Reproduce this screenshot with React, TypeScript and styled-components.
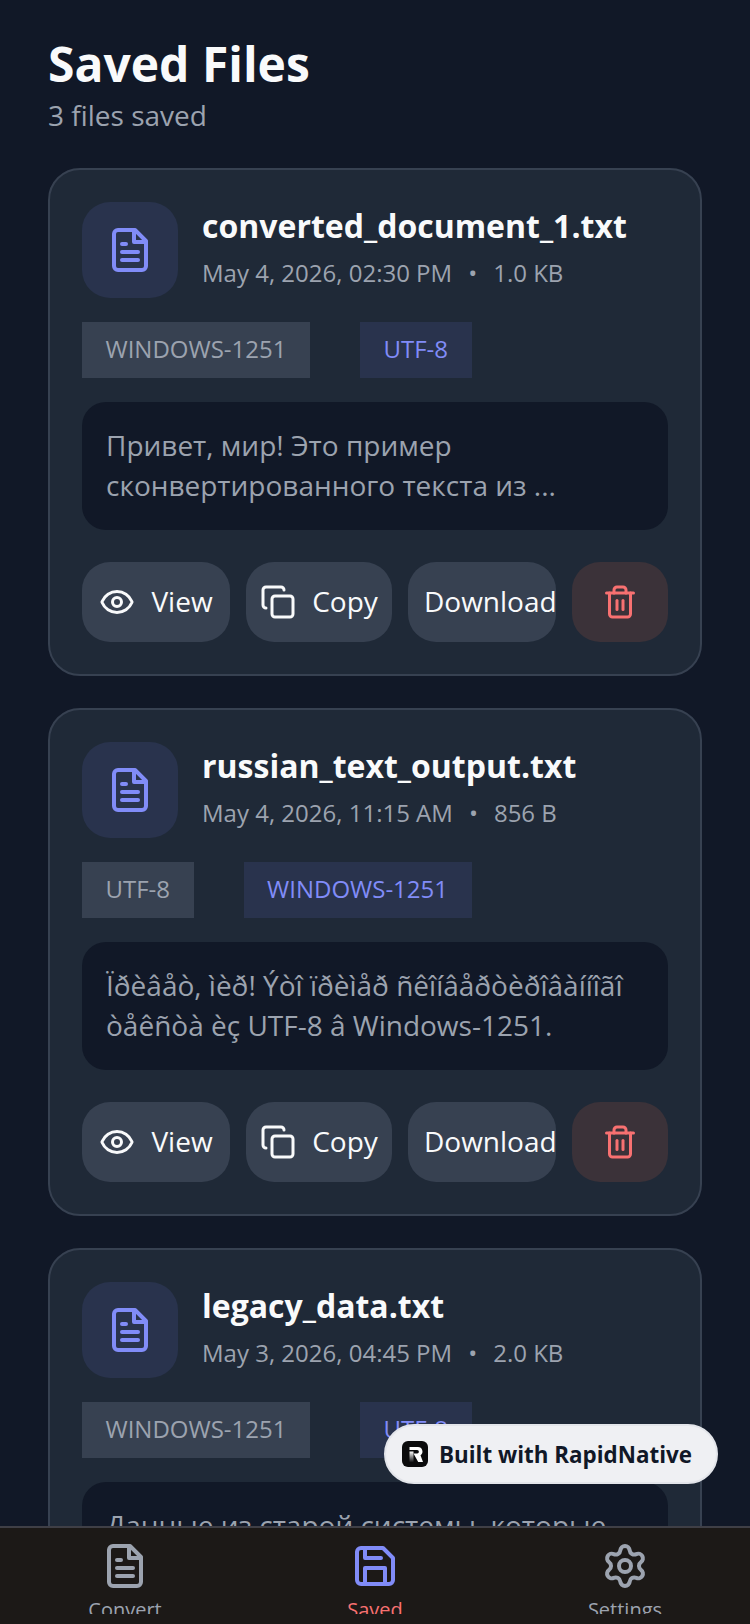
import styled, { createGlobalStyle } from "styled-components";
import { Copy, Eye, Settings, Trash2 } from "lucide-react";

const GlobalStyle = createGlobalStyle`
  html, body {
    margin: 0;
    padding: 0;
    background: #111827;
  }
  * {
    box-sizing: border-box;
  }
`;

const Screen = styled.div`
  position: relative;
  display: flex;
  flex-direction: column;
  width: 750px;
  height: 1624px;
  overflow: hidden;
  background: #111827;
  font-family: "Open Sans", "Noto Sans", sans-serif;
`;

const Scroll = styled.main`
  flex: 1;
  min-height: 0;
  overflow: hidden;
  padding: 32px 48px 0;
`;

const Title = styled.h1`
  margin: 0;
  font-size: 48px;
  line-height: 64px;
  font-weight: 700;
  color: #f9fafb;
`;

const Subtitle = styled.p`
  margin: 0 0 34px;
  font-size: 28px;
  line-height: 38px;
  color: #9ca3af;
`;

const CardList = styled.div`
  display: flex;
  flex-direction: column;
  gap: 32px;
`;

const Card = styled.article`
  padding: 32px;
  border: 2px solid #374151;
  border-radius: 32px;
  background: #1f2937;
`;

const CardHead = styled.div`
  display: flex;
  align-items: flex-start;
  gap: 24px;
  margin-bottom: 24px;
`;

const IconTile = styled.div`
  display: flex;
  align-items: center;
  justify-content: center;
  width: 96px;
  height: 96px;
  border-radius: 28px;
  background: #29334d;
  color: #818cf8;
`;

const FileName = styled.div`
  font-size: 32px;
  line-height: 47px;
  font-weight: 700;
  color: #f9fafb;
`;

const Meta = styled.div`
  display: flex;
  gap: 16px;
  margin-top: 4px;
  font-size: 24px;
  line-height: 40px;
  color: #9ca3af;
`;

const Tags = styled.div`
  display: flex;
  gap: 50px;
  margin-bottom: 24px;
`;

const Tag = styled.span<{ $target?: boolean }>`
  height: 56px;
  padding: 0 23.5px;
  font-size: 24px;
  line-height: 54px;
  color: ${(p) => (p.$target ? "#818cf8" : "#9ca3af")};
  background: ${(p) => (p.$target ? "#29334d" : "#374151")};
`;

const Preview = styled.div`
  padding: 23px 24px 25px;
  margin-bottom: 32px;
  border-radius: 24px;
  background: #111827;
  font-size: 28px;
  line-height: 40px;
  color: #9ca3af;
`;

const Actions = styled.div`
  display: grid;
  grid-template-columns: 148px 146px 148px 96px;
  gap: 16px;
`;

const ActionButton = styled.button`
  min-width: 0;
  display: flex;
  align-items: center;
  justify-content: center;
  gap: 16px;
  height: 80px;
  padding: 0 16px;
  border: 0;
  border-radius: 28px;
  background: #374151;
  color: #f9fafb;
  font-family: inherit;
  font-size: 28px;
  white-space: nowrap;

  svg {
    flex: none;
  }
`;

const ActionLabel = styled.span`
  margin-bottom: 2px;
`;

const DownloadButton = styled(ActionButton)`
  justify-content: flex-start;
`;

const DeleteButton = styled(ActionButton)`
  background: #3b3239;
  color: #f87171;
`;

const TabBar = styled.nav`
  flex: 0 0 98px;
  display: grid;
  grid-template-columns: repeat(3, 1fr);
  border-top: 2px solid #3f3f46;
  background: #1c1917;
  overflow: hidden;
`;

const Tab = styled.div<{ $active?: boolean }>`
  display: flex;
  flex-direction: column;
  align-items: center;
  padding-top: 14px;
  color: ${(p) => (p.$active ? "#818cf8" : "#9ca3af")};
`;

const TabLabel = styled.span<{ $active?: boolean }>`
  height: 19px;
  overflow: hidden;
  margin-top: 5px;
  font-size: 20px;
  line-height: 30px;
  color: ${(p) => (p.$active ? "#f87171" : "#9ca3af")};
`;

const Badge = styled.div`
  position: absolute;
  left: 384px;
  top: 1424px;
  display: flex;
  align-items: center;
  gap: 11px;
  width: 334px;
  height: 60px;
  padding: 0 16px;
  border: 2px solid #e3e5ea;
  border-radius: 30px;
  background: #eff0f3;
  color: #111827;
  font-size: 22.4px;
  font-weight: 700;
  white-space: nowrap;
`;

const BadgeLogo = styled.svg`
  flex: none;
  width: 26px;
  height: 26px;
`;

const Glyph = styled.svg`
  fill: none;
  stroke: currentColor;
  stroke-width: 2;
  stroke-linecap: round;
  stroke-linejoin: round;
`;

// the file glyph with the hard diagonal fold, as in the reference
function DocIcon() {
  return (
    <Glyph width="48" height="48" viewBox="0 0 24 24">
      <path d="M14.500 2H6a2 2 0 0 0-2 2v16a2 2 0 0 0 2 2h12a2 2 0 0 0 2-2V7.500L14.500 2z" />
      <path d="M14 2v6h6" />
      <path d="M16 13H8" />
      <path d="M16 17H8" />
      <path d="M10 9H8" />
    </Glyph>
  );
}

function SaveIcon() {
  return (
    <Glyph width="48" height="48" viewBox="0 0 24 24">
      <path d="M19 21H5a2 2 0 0 1-2-2V5a2 2 0 0 1 2-2h11l5 5v11a2 2 0 0 1-2 2z" />
      <path d="M17 21v-8H7v8" />
      <path d="M7 3v5h8" />
    </Glyph>
  );
}

const files = [
  {
    name: "converted_document_1.txt",
    date: "May 4, 2026, 02:30 PM",
    size: "1.0 KB",
    from: "WINDOWS-1251",
    to: "UTF-8",
    text: "Привет, мир! Это пример сконвертированного текста из ...",
  },
  {
    name: "russian_text_output.txt",
    date: "May 4, 2026, 11:15 AM",
    size: "856 B",
    from: "UTF-8",
    to: "WINDOWS-1251",
    text: "Ïðèâåò, ìèð! Ýòî ïðèìåð ñêîíâåðòèðîâàííîãî òåêñòà èç UTF-8 â Windows-1251.",
  },
  {
    name: "legacy_data.txt",
    date: "May 3, 2026, 04:45 PM",
    size: "2.0 KB",
    from: "WINDOWS-1251",
    to: "UTF-8",
    text: "Данные из старой системы, которые",
  },
];

export default function App() {
  return (
    <Screen>
      <GlobalStyle />
      <Scroll>
        <Title>Saved Files</Title>
        <Subtitle>3 files saved</Subtitle>
        <CardList>
          {files.map((file) => (
            <Card key={file.name}>
              <CardHead>
                <IconTile>
                  <DocIcon />
                </IconTile>
                <div>
                  <FileName>{file.name}</FileName>
                  <Meta>
                    <span>{file.date}</span>
                    <span>•</span>
                    <span>{file.size}</span>
                  </Meta>
                </div>
              </CardHead>
              <Tags>
                <Tag>{file.from}</Tag>
                <Tag $target>{file.to}</Tag>
              </Tags>
              <Preview>{file.text}</Preview>
              <Actions>
                <ActionButton>
                  <Eye size={36} />
                  <ActionLabel>View</ActionLabel>
                </ActionButton>
                <ActionButton>
                  <Copy size={36} />
                  <ActionLabel>Copy</ActionLabel>
                </ActionButton>
                <DownloadButton>
                  <ActionLabel>Download</ActionLabel>
                </DownloadButton>
                <DeleteButton aria-label="Delete">
                  <Trash2 size={36} />
                </DeleteButton>
              </Actions>
            </Card>
          ))}
        </CardList>
      </Scroll>
      <TabBar>
        <Tab>
          <DocIcon />
          <TabLabel>Convert</TabLabel>
        </Tab>
        <Tab $active>
          <SaveIcon />
          <TabLabel $active>Saved</TabLabel>
        </Tab>
        <Tab>
          <Settings size={48} />
          <TabLabel>Settings</TabLabel>
        </Tab>
      </TabBar>
      <Badge>
        <BadgeLogo viewBox="0 0 26 26">
          <defs>
            <linearGradient id="stemFade" x1="0" y1="0" x2="0" y2="1">
              <stop offset="0" stopColor="#fff" />
              <stop offset="1" stopColor="#fff" stopOpacity="0.05" />
            </linearGradient>
          </defs>
          <rect width="26" height="26" rx="6" fill="#0b0b0c" />
          <path d="M7.500 10.500h4v10.500h-4z" fill="url(#stemFade)" />
          <path d="M7.500 6H16a4.500 4.500 0 0 1 2.500 8.200L21 21h-4.800l-4.700-8.500h3.700a1.700 1.700 0 0 0 0-3.400H7.500z" fill="#fff" />
        </BadgeLogo>
        Built with RapidNative
      </Badge>
    </Screen>
  );
}
